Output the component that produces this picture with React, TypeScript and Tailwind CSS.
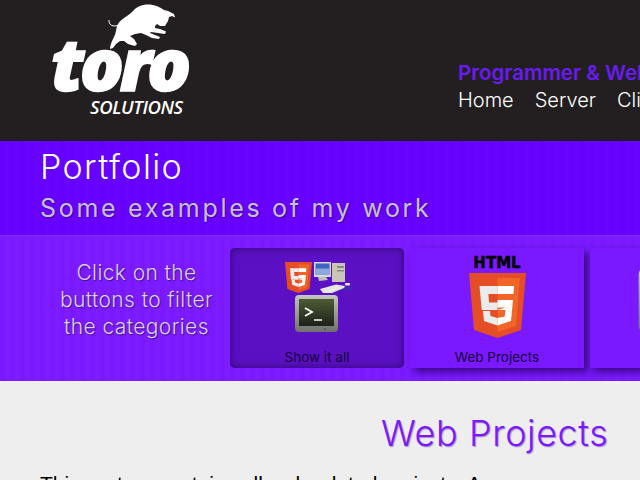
const navLinks = ["Home", "Server", "Client"];

function BullLogo() {
  return (
    <svg viewBox="100 0 80 52" className="absolute left-[100px] top-0 w-[80px] h-[52px]">
      <path d="M109 20C108.500 25 113 27.500 119 25" fill="none" stroke="#fff" strokeWidth="1" />
      <path
        fill="#fff"
        d="M117 26C120 19 127 17 132 12C137 6 143 4 150 4.500C155 5 160 7 164 10L168 11L170 12L174 14L175 17.500L172 16L169 17L168 21L165 26L160 26L157 24L155 26L155 28L160 29L166 31.500L165 34L158 33L151 32L150 33L155 35L160 37L159 39L152 38L146 35L141 33L135 34L130 36L134 39L137 44L135 46L128 44L124 41L120 41L116 44L113 48L110 49C110 45 112 41 114 37C116 33 116 30 117 26Z"
      />
    </svg>
  );
}

function Logo() {
  return (
    <div className="relative w-[240px] h-[141px] shrink-0 text-white font-['Open_Sans',sans-serif] italic">
      <BullLogo />
      <div className="pl-[51px] pt-[29px] h-[97px] font-extrabold text-[73px] leading-[68px] tracking-[-4.500px] [-webkit-text-stroke:1.5px_white]">
        toro
      </div>
      <div className="pl-[90px] font-semibold text-[18.500px] leading-[20px] tracking-[-0.400px]">SOLUTIONS</div>
    </div>
  );
}

function Html5Shield({ className }: { className: string }) {
  return (
    <svg viewBox="0 0 57 65" className={className}>
      <path fill="#e44d26" d="M0 0h57l-5 57-23.500 8L5 57z" />
      <path fill="#f16529" d="M28.500 5H51l-4 48-18.500 6z" />
      <path fill="#ebebeb" d="M28.500 13H10.500l2.200 24h15.800v-7.500H20l-.6-8.500h9.100zM28.500 45l-7-2-.5-5h-7l1 10 13.500 4.500z" />
      <path fill="#fff" d="M28.500 37h8l-.8 6.500-7.200 1.500v7.500l13.500-4.500 2-21H28.500v7.500h8.500l-.5 0zM28.500 13v8h16l.5-8z" />
    </svg>
  );
}

function TerminalIcon({ className }: { className: string }) {
  return (
    <svg viewBox="0 0 43 37" className={className}>
      <defs>
        <linearGradient id="bezel" x1="0" y1="0" x2="0" y2="1">
          <stop offset="0" stopColor="#c4c6c0" />
          <stop offset="1" stopColor="#6f716c" />
        </linearGradient>
        <linearGradient id="screen" x1="0" y1="0" x2="0" y2="1">
          <stop offset="0" stopColor="#4d5c34" />
          <stop offset="1" stopColor="#1c211a" />
        </linearGradient>
      </defs>
      <rect width="43" height="37" rx="4" fill="url(#bezel)" />
      <rect x="4" y="4" width="35" height="27" fill="url(#screen)" />
      <path d="M10 13l7 4-7 4" fill="none" stroke="#fff" strokeWidth="1.800" />
      <path d="M19 25h8" stroke="#fff" strokeWidth="1.500" />
      <circle cx="30" cy="34" r="0.800" fill="#333" />
    </svg>
  );
}

function AllIcon() {
  return (
    <div className="relative w-[90px] h-[85px]">
      <Html5Shield className="absolute left-[13px] top-[14px] w-[27px] h-[31px]" />
      {/* desktop computer */}
      <svg viewBox="0 0 44 32" className="absolute left-[42px] top-[14px] w-[44px] h-[32px]">
        <path fill="#3b2fa8" d="M24 24l18 1.500-8 2.500-10-1z" />
        <rect x="18" y="1" width="13" height="19" fill="#c9c6b8" />
        <rect x="23" y="4" width="7" height="2" fill="#8a8a80" />
        <rect x="23" y="8" width="7" height="1.500" fill="#8a8a80" />
        <rect x="0" y="0" width="17" height="15" fill="#d5d8de" />
        <rect x="1.500" y="1.500" width="14" height="11" fill="#3f63c4" />
        <rect x="1.500" y="6.500" width="14" height="6" fill="#8fa6e0" />
        <path fill="#bdbdb4" d="M4 15h8l2 3-9 1z" />
        <path fill="#e8e8e2" d="M6 27l16-4.500 9 1.500-1 2-12 5h-9z" />
        <rect x="31" y="21" width="5" height="2.500" rx="1" fill="#e8e8e2" />
      </svg>
      <TerminalIcon className="absolute left-[23px] top-[47px] w-[43px] h-[37px]" />
    </div>
  );
}

function WebIcon() {
  return (
    <div className="flex flex-col items-center">
      <span className="font-['DejaVu_Sans',sans-serif] font-bold text-[15px] leading-[13px] text-black mt-[9px] [-webkit-text-stroke:0.4px_black]">
        HTML
      </span>
      <Html5Shield className="w-[57px] h-[65px] mt-[3px]" />
    </div>
  );
}

function FilterButton({ label, active, children }: { label: string; active?: boolean; children?: React.ReactNode }) {
  return (
    <div
      className={`flex flex-col items-center justify-between shrink-0 w-[174px] h-[120px] ${
        active
          ? "bg-[#5c10c4] rounded-[5px] shadow-[inset_0_0_8px_rgba(30,0,80,0.7)]"
          : "bg-[#7a19ff] shadow-[4px_4px_8px_rgba(40,0,100,0.8)]"
      }`}
    >
      {children}
      <span className="text-[13.500px] leading-[16px] mb-[3px] text-[#14003a]">{label}</span>
    </div>
  );
}

export default function App() {
  return (
    <div className="w-[640px] h-[480px] overflow-hidden bg-[#eeeeee] font-['Inter',sans-serif]">
      <header className="h-[141px] bg-[#231f20] flex">
        <Logo />
        <div className="pl-[218px] pt-[60px] whitespace-nowrap">
          <p className="text-[20.500px] leading-[26px] font-semibold text-[#6a1bf0]">Programmer &amp; Web Developer</p>
          <nav className="flex gap-[21px] mt-[1px] text-[20px] leading-[26px] font-light text-white">
            {navLinks.map((link) => (
              <a key={link}>{link}</a>
            ))}
          </nav>
        </div>
      </header>

      <section className="h-[95px] bg-[repeating-linear-gradient(90deg,#6600ff_0,#6600ff_5px,#6803ff_5px,#6803ff_10px)] pl-[40px] pt-[6px] border-b border-[#7f2bff]">
        <h1 className="text-[34px] leading-[40px] font-light tracking-[1.400px] text-white">Portfolio</h1>
        <h2 className="text-[25px] leading-[34px] mt-[4px] tracking-[2.700px] text-[#c8c0cc] [text-shadow:1px_1px_1px_rgba(0,0,0,0.35)]">
          Some examples of my work
        </h2>
      </section>

      <section className="h-[145px] bg-[repeating-linear-gradient(90deg,#7a19ff_0,#7a19ff_5px,#7c1cff_5px,#7c1cff_10px)] flex overflow-hidden">
        <p className="w-[230px] shrink-0 pl-[53px] pr-[10px] pt-[23px] text-center text-[21px] leading-[27px] font-light tracking-[0.400px] text-[#d8d0dc] [text-shadow:1px_1px_1px_rgba(0,0,0,0.45)]">
          Click on the buttons to filter the categories
        </p>
        <div className="flex gap-[6px] pt-[12px]">
          <FilterButton label="Show it all" active>
            <AllIcon />
          </FilterButton>
          <FilterButton label="Web Projects">
            <WebIcon />
          </FilterButton>
          <FilterButton label="">
            <TerminalIcon className="w-[78px] h-[66px] mt-[19px]" />
          </FilterButton>
        </div>
      </section>

      <main className="px-[40px]">
        <h2 className="text-[36px] leading-[44px] pt-[30px] pl-[341px] font-light tracking-[0.600px] whitespace-nowrap text-[#7a19ff] [text-shadow:1px_1px_1px_rgba(60,0,140,0.4)]">
          Web Projects
        </h2>
        <p className="mt-[17px] font-['Liberation_Sans',sans-serif] text-[21px] leading-[24px] whitespace-nowrap text-black">
          This system contains all web related projects. A
        </p>
      </main>
    </div>
  );
}
